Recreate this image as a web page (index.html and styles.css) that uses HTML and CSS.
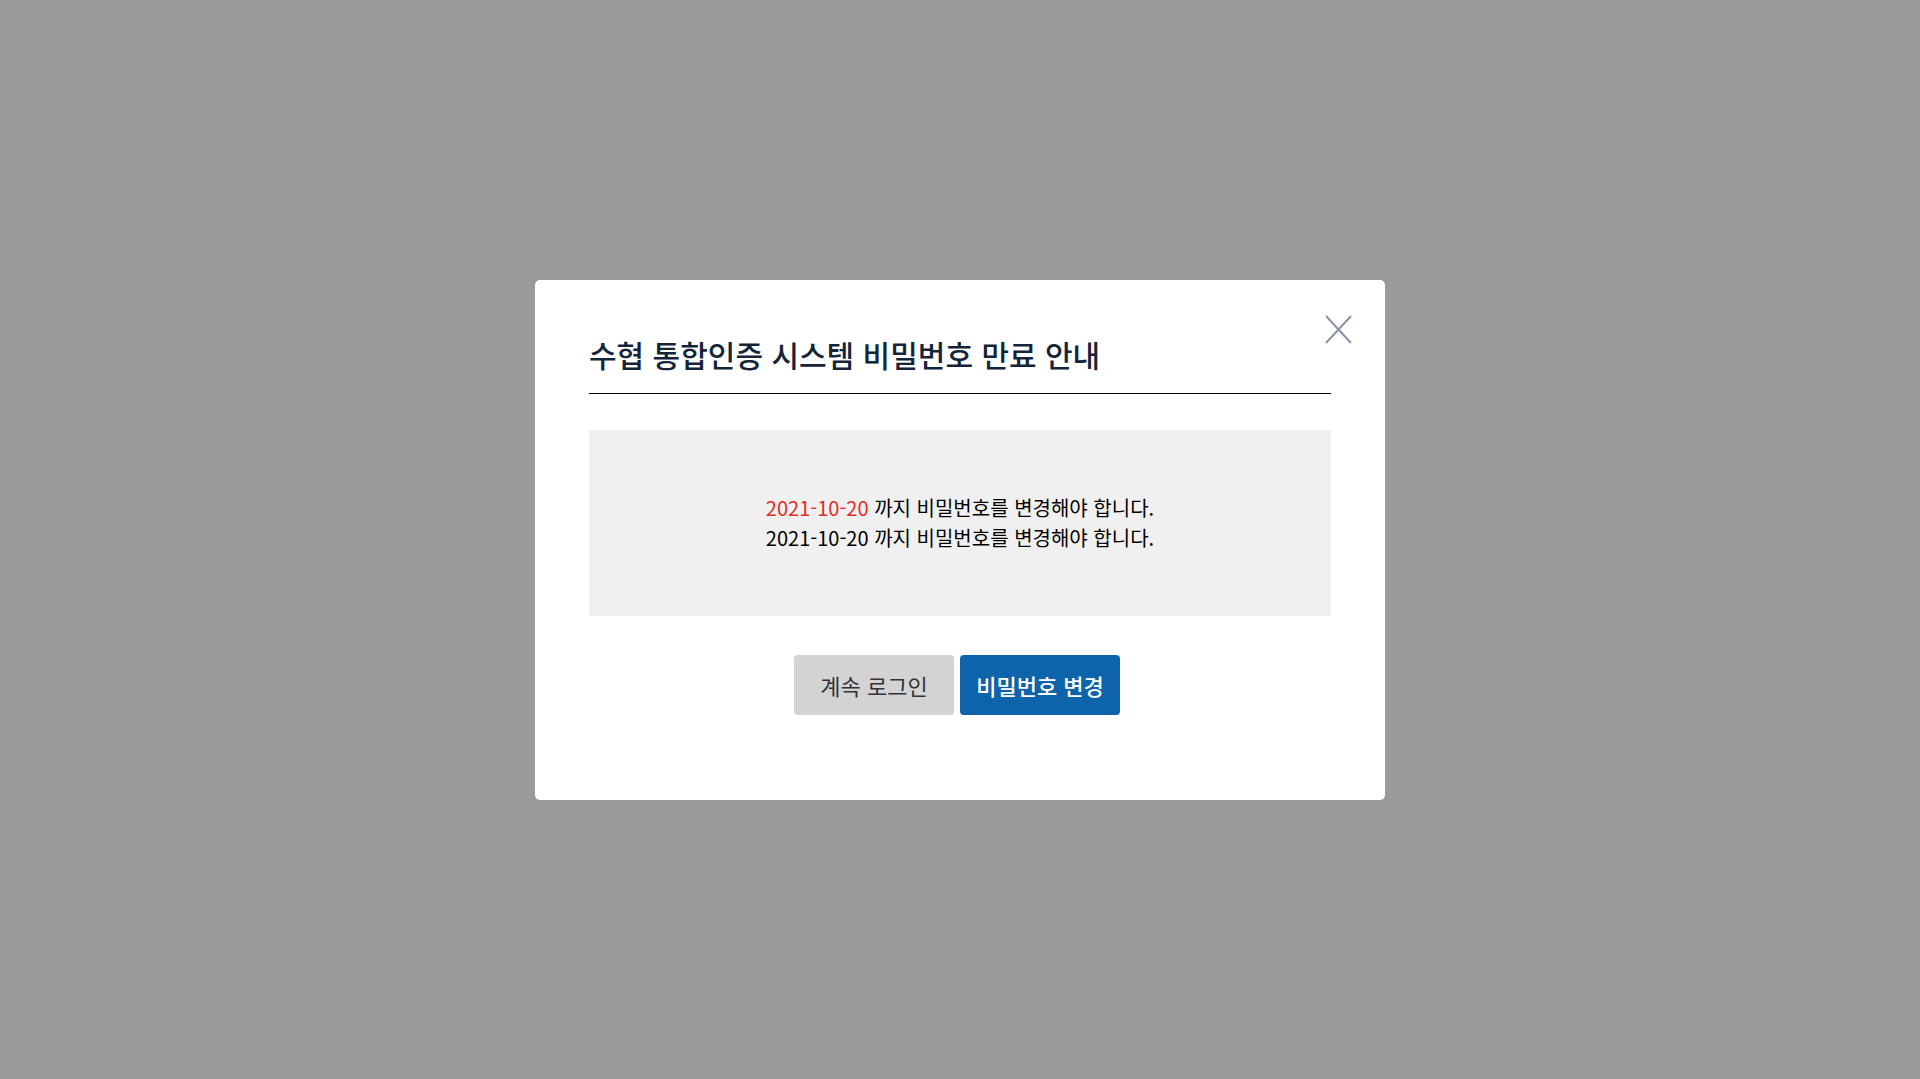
FILE: index.html
```html
<!DOCTYPE html>
<html lang="ko">
<head>
<meta charset="utf-8">
<title>비밀번호 만료 안내</title>
<link rel="stylesheet" href="styles.css">
</head>
<body>
<div class="overlay">
  <div class="modal">
    <button class="close" type="button" aria-label="닫기">
      <svg width="27" height="29" viewBox="0 0 27 29"><path d="M1 1 L26 28 M26 1 L1 28" stroke="#8a93a5" stroke-width="2" fill="none"/></svg>
    </button>
    <h2 class="title">수협 통합인증 시스템 비밀번호 만료 안내</h2>
    <div class="message">
      <p><span class="date">2021-10-20</span> 까지 비밀번호를 변경해야 합니다.</p>
      <p>2021-10-20 까지 비밀번호를 변경해야 합니다.</p>
    </div>
    <div class="actions">
      <button class="btn btn-gray" type="button">계속 로그인</button>
      <button class="btn btn-blue" type="button">비밀번호 변경</button>
    </div>
  </div>
</div>
</body>
</html>
```
FILE: styles.css
```css
html, body {
  margin: 0;
  padding: 0;
  height: 100%;
}
body {
  background: #9a9a9a;
  font-family: "Noto Sans CJK KR", "Noto Sans", sans-serif;
}
.overlay {
  height: 100%;
  display: flex;
  justify-content: center;
  align-items: flex-start;
  padding-top: 280px;
  box-sizing: border-box;
}
.modal {
  position: relative;
  width: 850px;
  box-sizing: border-box;
  background: #fff;
  border-radius: 5px;
  padding: 53px 54px 85px;
}
.close {
  position: absolute;
  top: 35px;
  right: 33px;
  width: 27px;
  height: 29px;
  padding: 0;
  border: 0;
  background: none;
  cursor: pointer;
}
.close svg { display: block; }
.title {
  margin: 0;
  font-size: 30px;
  font-weight: 500;
  line-height: 42px;
  color: #14253a;
  padding-bottom: 18px;
  border-bottom: 1px solid #000;
}
.message {
  margin-top: 36px;
  height: 186px;
  background: #f0f0f0;
  display: flex;
  flex-direction: column;
  justify-content: center;
  align-items: center;
  font-size: 20px;
  line-height: 30px;
  color: #000;
}
.message p { margin: 0; }
.date { color: #e42b25; }
.actions {
  margin-top: 39px;
  display: flex;
  justify-content: center;
  gap: 6px;
  padding-right: 6px;
}
.btn {
  width: 160px;
  height: 60px;
  border: 0;
  border-radius: 4px;
  font-family: "Noto Sans CJK KR", "Noto Sans", sans-serif;
  font-size: 22px;
  cursor: pointer;
}
.btn-gray {
  background: #d3d3d3;
  color: #333;
}
.btn-blue {
  background: #0e64ab;
  color: #fff;
  font-weight: 500;
}
```
